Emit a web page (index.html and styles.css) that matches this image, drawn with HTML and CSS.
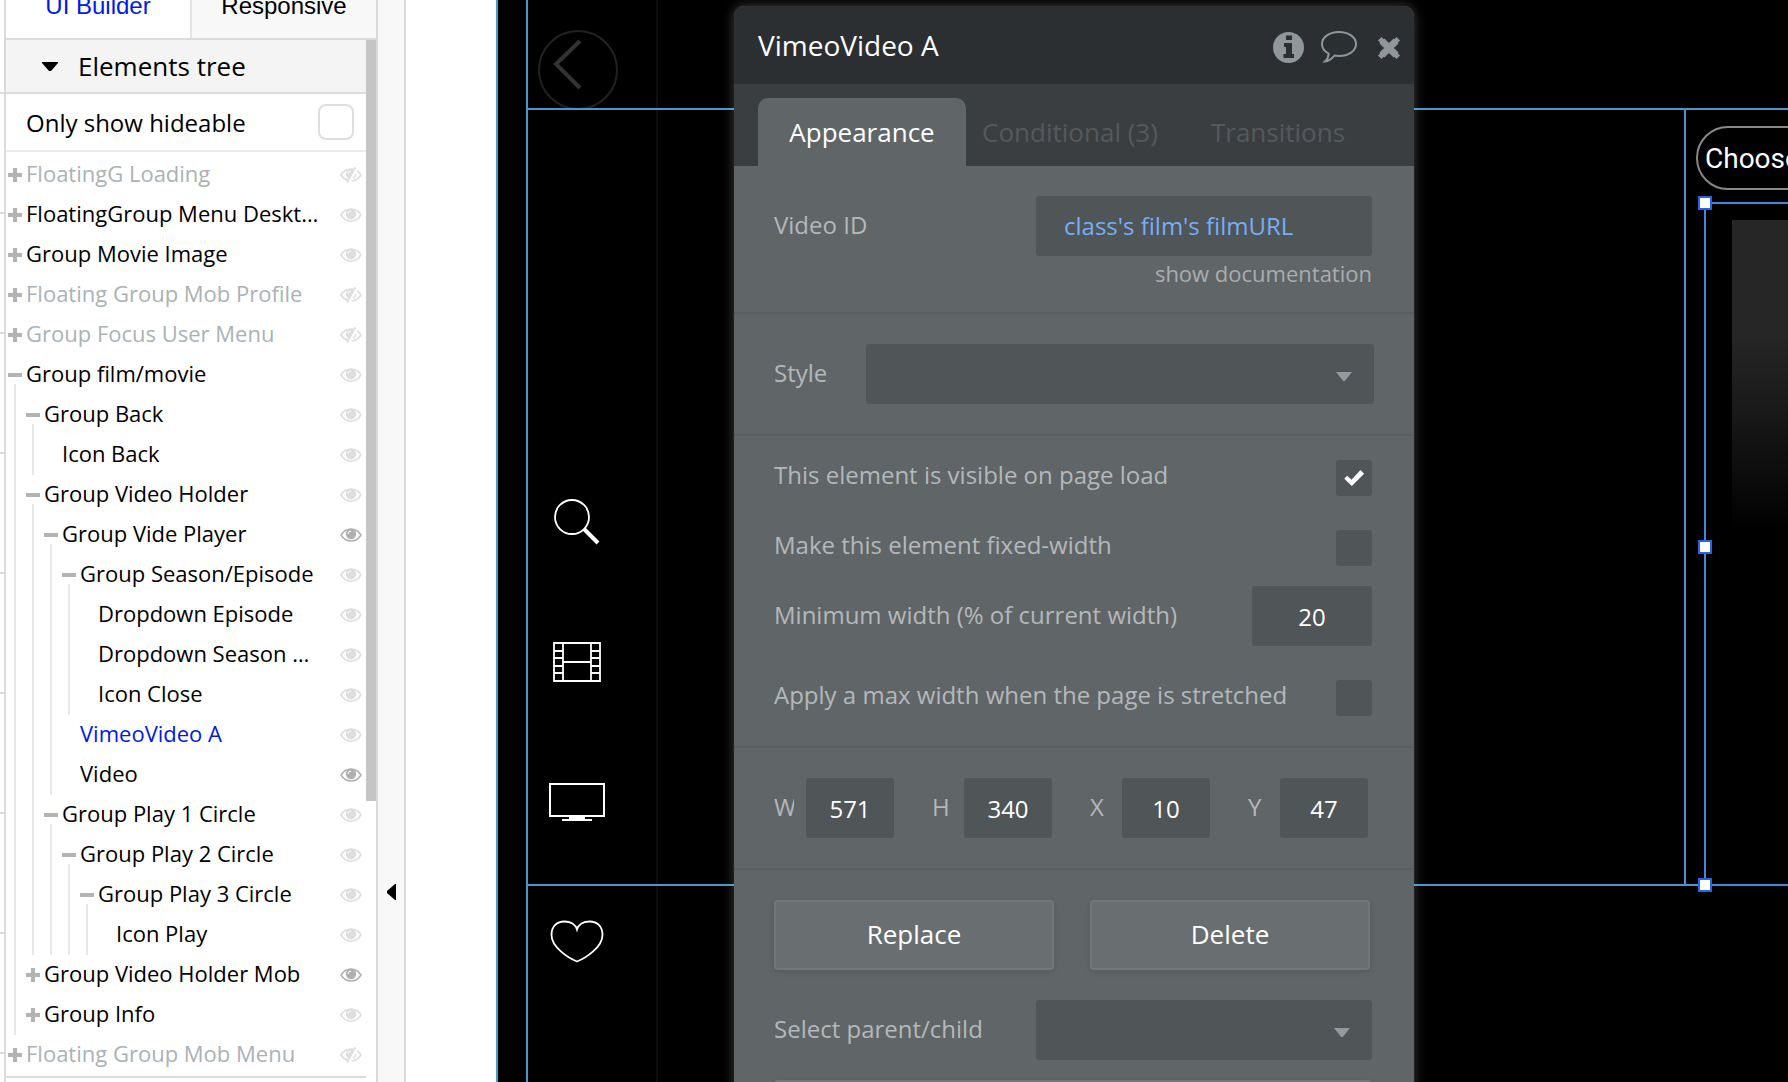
FILE: index.html
```html
<!DOCTYPE html>
<html lang="en">
<head>
<meta charset="utf-8">
<title>UI Builder</title>
<link rel="stylesheet" href="styles.css">
</head>
<body>
<svg class="defs" aria-hidden="true">
  <symbol id="eye" viewBox="0 0 22 14">
    <path d="M1 7C3.500 3 7 1 11 1s7.500 2 10 6c-2.500 4-6 6-10 6S3.500 11 1 7z" fill="none" stroke="currentColor" stroke-width="1.500"/>
    <circle cx="11" cy="6" r="5.200" fill="currentColor"/>
    <path d="M8 6a3 3 0 0 1 3-3" fill="none" stroke="#fff" stroke-width="1"/>
  </symbol>
  <symbol id="eye-off" viewBox="0 0 22 16">
    <path d="M8.500 13.600C5.500 12.800 3 11 1 8c2.500-4 6-6 10-6 .8 0 1.500.1 2.200.2M17 4c1.500 1 2.900 2.300 4 4-2.300 3.600-5.500 5.600-9.200 6" fill="none" stroke="currentColor" stroke-width="1.700"/>
    <path d="M6 6.500a5 5 0 0 0 2.800 5.200L13.500 3A5 5 0 0 0 6 6.500zM16 6l-3.600 6.300A5 5 0 0 0 16 6z" fill="currentColor"/>
    <path d="M8 7a3 3 0 0 1 3-3" fill="none" stroke="#fff" stroke-width="1"/>
    <path d="M15.300.5L6.900 15.500" stroke="currentColor" stroke-width="1.800"/>
  </symbol>
</svg>
<div class="app">
  <div class="ruler"></div>
  <aside class="sidebar">
    <nav class="tabs">
      <button class="tab active">UI Builder</button>
      <button class="tab">Responsive</button>
    </nav>
    <div class="scroller">
      <div class="tree-pane">
        <h2 class="tree-head"><svg width="16" height="9" viewBox="0 0 16 9"><path d="M0 0h16v1L9 9H7L0 1z"/></svg>Elements tree</h2>
        <label class="hideable"><span>Only show hideable</span><input type="checkbox"></label>
        <ul class="tree">
          <li><div class="row off"><button class="tog plus" aria-label="Expand"></button><span>FloatingG Loading</span><svg class="eye"><use href="#eye-off"/></svg></div></li>
          <li><div class="row"><button class="tog plus" aria-label="Expand"></button><span>FloatingGroup Menu Desktop</span><svg class="eye"><use href="#eye"/></svg></div></li>
          <li><div class="row"><button class="tog plus" aria-label="Expand"></button><span>Group Movie Image</span><svg class="eye"><use href="#eye"/></svg></div></li>
          <li><div class="row off"><button class="tog plus" aria-label="Expand"></button><span>Floating Group Mob Profile</span><svg class="eye"><use href="#eye-off"/></svg></div></li>
          <li><div class="row off"><button class="tog plus" aria-label="Expand"></button><span>Group Focus User Menu</span><svg class="eye"><use href="#eye-off"/></svg></div></li>
          <li><div class="row"><button class="tog" aria-label="Collapse"></button><span>Group film/movie</span><svg class="eye"><use href="#eye"/></svg></div>
            <ul>
              <li><div class="row"><button class="tog" aria-label="Collapse"></button><span>Group Back</span><svg class="eye"><use href="#eye"/></svg></div>
                <ul>
                  <li><div class="row leaf"><span>Icon Back</span><svg class="eye"><use href="#eye"/></svg></div></li>
                </ul>
              </li>
              <li><div class="row"><button class="tog" aria-label="Collapse"></button><span>Group Video Holder</span><svg class="eye"><use href="#eye"/></svg></div>
                <ul>
                  <li><div class="row"><button class="tog" aria-label="Collapse"></button><span>Group Vide Player</span><svg class="eye strong"><use href="#eye"/></svg></div>
                    <ul>
                      <li><div class="row"><button class="tog" aria-label="Collapse"></button><span>Group Season/Episode</span><svg class="eye"><use href="#eye"/></svg></div>
                        <ul>
                          <li><div class="row leaf"><span>Dropdown Episode</span><svg class="eye"><use href="#eye"/></svg></div></li>
                          <li><div class="row leaf"><span>Dropdown Season Number</span><svg class="eye"><use href="#eye"/></svg></div></li>
                          <li><div class="row leaf"><span>Icon Close</span><svg class="eye"><use href="#eye"/></svg></div></li>
                        </ul>
                      </li>
                      <li><div class="row leaf selected"><span>VimeoVideo A</span><svg class="eye"><use href="#eye"/></svg></div></li>
                      <li><div class="row leaf"><span>Video</span><svg class="eye strong"><use href="#eye"/></svg></div></li>
                    </ul>
                  </li>
                  <li><div class="row"><button class="tog" aria-label="Collapse"></button><span>Group Play 1 Circle</span><svg class="eye"><use href="#eye"/></svg></div>
                    <ul>
                      <li><div class="row"><button class="tog" aria-label="Collapse"></button><span>Group Play 2 Circle</span><svg class="eye"><use href="#eye"/></svg></div>
                        <ul>
                          <li><div class="row"><button class="tog" aria-label="Collapse"></button><span>Group Play 3 Circle</span><svg class="eye"><use href="#eye"/></svg></div>
                            <ul>
                              <li><div class="row leaf"><span>Icon Play</span><svg class="eye"><use href="#eye"/></svg></div></li>
                            </ul>
                          </li>
                        </ul>
                      </li>
                    </ul>
                  </li>
                </ul>
              </li>
              <li><div class="row"><button class="tog plus" aria-label="Expand"></button><span>Group Video Holder Mob</span><svg class="eye strong"><use href="#eye"/></svg></div></li>
              <li><div class="row"><button class="tog plus" aria-label="Expand"></button><span>Group Info</span><svg class="eye"><use href="#eye"/></svg></div></li>
            </ul>
          </li>
          <li><div class="row off"><button class="tog plus" aria-label="Expand"></button><span>Floating Group Mob Menu</span><svg class="eye"><use href="#eye-off"/></svg></div></li>
        </ul>
      </div>
      <div class="scrollbar"><div class="thumb"></div></div>
    </div>
  </aside>
  <button class="collapse" aria-label="Collapse sidebar"><svg width="9" height="16" viewBox="0 0 9 16"><path d="M9 0v16H8L0 9V7L8 0z"/></svg></button>

  <main class="workspace">
    <div class="canvas">
      <div class="group-outline"></div>
      <div class="menu-edge"></div>
      <svg class="node back" width="80" height="80" viewBox="0 0 80 80"><circle cx="40" cy="40" r="39" fill="none" stroke="#222" stroke-width="2"/><path d="M42 11L18 34l24 24" fill="none" stroke="#333" stroke-width="4"/></svg>
      <div class="film-outline"></div>
      <svg class="node search" width="46" height="46" viewBox="0 0 46 46" fill="none" stroke="#fff"><circle cx="18" cy="18" r="17" stroke-width="1.800"/><path d="M30 30l14 14" stroke-width="4"/></svg>
      <svg class="node film" width="48" height="40" viewBox="0 0 48 40" fill="none" stroke="#fff" stroke-width="1.800"><path d="M1 1h46v38H1zM10 1v38M38 1v38M10 20h28M1 9h9M1 16h9M1 24h9M1 31h9M38 9h9M38 16h9M38 24h9M38 31h9"/></svg>
      <svg class="node screen" width="58" height="40" viewBox="0 0 58 40" fill="none" stroke="#fff" stroke-width="2"><path d="M2 2h54v32H2z"/><path d="M21 35h16v3H21z" fill="#fff" stroke="none"/><path d="M14 38h30"/></svg>
      <svg class="node heart" width="54" height="44" viewBox="0 0 54 44" fill="none" stroke="#fff" stroke-width="1.800"><path d="M27 41.500C18 38 1.500 27 1.500 15 1.500 6 7 1.500 14.500 1.500c6 0 11 3 12.500 8 1.500-5 6.500-8 12.500-8 7.500 0 13 4.500 13 13.500 0 12-16.500 23-25.500 26.500z"/></svg>
      <div class="player-edge"></div>
      <div class="dropdown-preview">Choose a season</div>
      <div class="shade"></div>
      <div class="selection">
        <i class="handle top"></i><i class="handle middle"></i><i class="handle bottom"></i>
      </div>
    </div>

    <section class="panel">
      <header class="panel-head">
        <h1>VimeoVideo A</h1>
        <button aria-label="Info"><svg width="31" height="31" viewBox="0 0 31 31"><circle cx="15.500" cy="15.500" r="15.500" fill="#8f979b"/><path d="M13 3.500h6v4.500h-6zM11 11h8v11h2v4H10.500v-4H13v-7h-2z" fill="#2b2f32"/></svg></button>
        <button aria-label="Comment"><svg width="36" height="32" viewBox="0 0 36 32"><path d="M18 1c9.400 0 17 5 17 12s-7.600 12-17 12c-1.500 0-3-.1-4.500-.4-2.500 2.800-5.500 5.500-9.500 5.900 2.200-2 3.500-4.700 3.700-7.900C3.500 20.500 1 17 1 13 1 6 8.600 1 18 1z" fill="none" stroke="#8f979b" stroke-width="2"/></svg></button>
        <button class="close" aria-label="Close"><svg width="24" height="24" viewBox="0 0 24 24"><path d="M5 5l14 14M19 5L5 19" stroke="#8f979b" stroke-width="7"/><path d="M4.500 4.500l15 15M19.500 4.500l-15 15" stroke="#8f979b" stroke-width="5" stroke-linecap="square"/></svg></button>
      </header>
      <nav class="panel-tabs">
        <button class="current">Appearance</button>
        <button>Conditional (3)</button>
        <button>Transitions</button>
      </nav>
      <div class="section video">
        <div class="field"><label for="vid">Video ID</label><input class="box expr" id="vid" type="text" value="class's film's filmURL"></div>
        <a class="doc" href="#docs">show documentation</a>
      </div>
      <div class="section">
        <div class="field style"><label for="style">Style</label><span class="select"><select class="box" id="style"><option></option></select></span></div>
      </div>
      <div class="section options">
        <div class="field tick"><label for="vis">This element is visible on page load</label><input class="check" id="vis" type="checkbox" checked></div>
        <div class="field tick"><label for="fixed">Make this element fixed-width</label><input class="check" id="fixed" type="checkbox"></div>
        <div class="field number"><label for="minw">Minimum width (% of current width)</label><input class="box" id="minw" type="text" value="20"></div>
        <div class="field tick"><label for="maxw">Apply a max width when the page is stretched</label><input class="check" id="maxw" type="checkbox"></div>
      </div>
      <div class="section dims">
        <label for="w">W</label><input class="box" id="w" type="text" value="571">
        <label for="h">H</label><input class="box" id="h" type="text" value="340">
        <label for="x">X</label><input class="box" id="x" type="text" value="10">
        <label for="y">Y</label><input class="box" id="y" type="text" value="47">
      </div>
      <div class="section actions">
        <div class="pair"><button class="btn">Replace</button><button class="btn">Delete</button></div>
        <div class="field"><label for="rel">Select parent/child</label><span class="select"><select class="box" id="rel"><option></option></select></span></div>
        <button class="btn wide" aria-label="More"></button>
      </div>
    </section>
  </main>
</div>
</body>
</html>
```

FILE: styles.css
```css
* { box-sizing: border-box; }
body { margin: 0; background: #fff; color: #000; font-family: "Open Sans", sans-serif; }
button, input, select { font: inherit; color: inherit; border: 0; padding: 0; margin: 0; background: none; }
h1, h2, ul { margin: 0; padding: 0; font-weight: 400; list-style: none; }
svg { display: block; flex: none; }
.defs { position: absolute; width: 0; height: 0; }

.app { display: flex; height: 100vh; overflow: hidden; }

/* ruler at the far left, one tick every 120px */
.ruler {
  flex: none; width: 6px; border-right: 2px solid #dbdbdb;
  background: repeating-linear-gradient(#fff 0 92px, #dbdbdb 92px 94px, #fff 94px 120px);
}

/* sidebar */
.sidebar { flex: none; width: 372px; display: flex; flex-direction: column; border-right: 2px solid #dbdbdb; }
.tabs { flex: none; display: flex; height: 40px; border-bottom: 2px solid #dbdbdb; font: 24px/28px "Liberation Sans", sans-serif; }
.tab { flex: 1; padding-bottom: 18px; background: #f8f8f8; display: flex; align-items: flex-end; justify-content: center; }
.tab.active { background: #fff; color: #0019e6; border-right: 2px solid #e4e4e4; }
.scroller { flex: 1; min-height: 0; display: flex; }
.tree-pane { flex: 1; min-width: 0; overflow: hidden; }
.tree-head {
  display: flex; align-items: center; gap: 20px; height: 54px; padding-left: 36px;
  background: #f4f4f4; border-bottom: 2px solid #dbdbdb; font-size: 26px; line-height: 36px;
}
.hideable {
  display: flex; align-items: center; justify-content: space-between; height: 58px; padding: 0 12px 0 20px;
  border-bottom: 2px solid #ebebeb; font-size: 24px; line-height: 34px;
}
.hideable span { padding-top: 2px; }
.hideable input { appearance: none; width: 36px; height: 36px; border: 2px solid #dedede; border-radius: 8px; background: #fff; }

.tree { padding: 3px 0 1px; border-bottom: 2px solid #dbdbdb; font-size: 22px; line-height: 30px; }
.tree ul { margin: -11px 0 0 8px; padding: 11px 0 0 8px; border-left: 2px solid #e8e8e8; }
.row { display: flex; align-items: center; height: 40px; padding: 0 4px 0 2px; }
.row span { flex: 1; min-width: 0; margin: 0 18px 4px 4px; white-space: nowrap; overflow: hidden; text-overflow: ellipsis; }
.row.leaf { padding-left: 16px; }
.row.off { color: #aab2b5; }
.row.selected { color: #0019e6; }
.tog { flex: none; width: 14px; height: 14px; background: linear-gradient(#b3b3b3, #b3b3b3) center / 14px 4px no-repeat; }
.tog.plus { background: linear-gradient(#b3b3b3, #b3b3b3) center / 14px 4px no-repeat, linear-gradient(#b3b3b3, #b3b3b3) center / 4px 14px no-repeat; }
.eye { width: 22px; height: 16px; color: #dedede; }
.eye.strong { color: #b0b0b0; }

.scrollbar { flex: none; width: 10px; }
.thumb { height: 73%; background: #c5c5c5; }

.collapse {
  flex: none; width: 28px; border-right: 2px solid #dbdbdb; background: #f8f8f8;
  display: flex; align-items: flex-start; justify-content: center; padding-top: 884px;
}

/* page canvas */
.workspace { position: relative; flex: 1; min-width: 0; margin-left: 90px; }
.canvas { position: absolute; inset: 0; overflow: hidden; background: #000; border-left: 2px solid #4597cc; }
.canvas > * { position: absolute; }
.group-outline { left: 28px; top: 0; bottom: 0; width: 2px; background: #4597cc; }
.menu-edge { left: 158px; top: 0; bottom: 0; width: 2px; background: #0e0e0e; }
.film-outline { left: 30px; right: 0; top: 108px; height: 778px; border: solid #4597cc; border-width: 2px 0; }
.player-edge { left: 1186px; top: 108px; height: 778px; width: 2px; background: #4597cc; }
.back { left: 40px; top: 30px; }
.search { left: 56px; top: 499px; }
.film { left: 55px; top: 642px; }
.screen { left: 50px; top: 782px; }
.heart { left: 52px; top: 920px; }
.dropdown-preview {
  left: 1198px; top: 126px; width: 300px; height: 64px; padding-left: 7px; border: 2px solid #888; border-radius: 32px;
  color: #fff; font: 28px/62px Roboto, sans-serif; white-space: nowrap;
}
.shade { left: 1234px; right: 0; top: 220px; height: 320px; background: linear-gradient(#262626 35%, #1a1a1a 58%, #000 97%); }
.selection { left: 1206px; right: 0; top: 202px; height: 684px; border: solid #4485dd; border-width: 2px 0 2px 2px; }
.handle { position: absolute; left: -8px; width: 14px; height: 14px; background: #fff; border: 2px solid #2563eb; }
.handle.top { top: -8px; }
.handle.middle { top: 336px; }
.handle.bottom { bottom: -8px; }

/* property editor */
.panel {
  position: absolute; left: 238px; top: 6px; width: 680px; background: #606568; border-radius: 10px 10px 0 0;
  box-shadow: 0 0 12px rgba(255, 255, 255, .25); font-size: 24px; line-height: 34px; color: #b4b8ba;
}
.panel-head { display: flex; align-items: center; gap: 17px; height: 78px; padding: 0 13px 0 24px; background: #2b2f32; border-radius: 10px 10px 0 0; color: #fff; }
.panel-head h1 { flex: 1; font-size: 28px; line-height: 40px; }
.panel-head button { padding-top: 4px; }
.panel-head .close { margin-left: 3px; padding-top: 6px; }
.panel-tabs { display: flex; align-items: flex-end; height: 82px; padding: 14px 24px 0; background: #3b3e41; color: #55595c; font-size: 26px; line-height: 36px; }
.panel-tabs button { height: 68px; width: 208px; border-radius: 10px 10px 0 0; }
.panel-tabs .current { background: #606568; color: #fff; }
.section { padding: 30px 42px 30px 40px; border-bottom: 2px solid #585d60; }
.field { display: flex; align-items: center; justify-content: space-between; }
.field label { padding-bottom: 2px; }
.box { display: block; height: 60px; border-radius: 3px; background: #505558; color: #fff; text-align: center; appearance: none; }
.expr { width: 336px; padding: 0 28px 2px; color: #77aef5; text-align: left; }
.doc { display: block; text-align: right; font-size: 22px; line-height: 34px; color: #a9adaf; text-decoration: none; }
.video { padding-bottom: 22px; }
.select { position: relative; width: 336px; }
.select::after { content: ""; position: absolute; right: 22px; top: 28px; width: 16px; height: 9px; background: #949a9d; clip-path: polygon(0 0, 100% 0, 55% 100%, 45% 100%); }
.select .box { width: 100%; }
.style { margin-right: -2px; }
.style .select { width: 508px; }
.options { display: grid; gap: 34px; padding-top: 24px; }
.tick { height: 36px; }
.tick label { padding-bottom: 6px; }
.number { margin-top: -14px; }
.number .box { width: 120px; }
.check { appearance: none; width: 36px; height: 36px; border-radius: 3px; background: #505558; }
.check:checked::after { content: ""; display: block; width: 36px; height: 36px; background: #fff; clip-path: polygon(23% 52%, 31% 44%, 43% 55%, 68% 28%, 78% 38%, 44% 72%); }
.dims { display: flex; align-items: center; gap: 12px; }
.dims label { flex: none; width: 20px; overflow: hidden; padding-bottom: 2px; }
.dims label:not(:first-child) { margin-left: 26px; }
.dims .box { width: 88px; }
.actions { display: grid; gap: 30px; border: 0; }
.pair { display: grid; grid-template-columns: 1fr 1fr; gap: 36px; padding-right: 2px; }
.btn { height: 70px; padding-bottom: 2px; border: 2px solid #72777a; border-radius: 4px; background: #696e71; color: #fff; font-size: 26px; box-shadow: 0 2px 6px rgba(0, 0, 0, .12); }
.wide { margin-top: -10px; }
```
